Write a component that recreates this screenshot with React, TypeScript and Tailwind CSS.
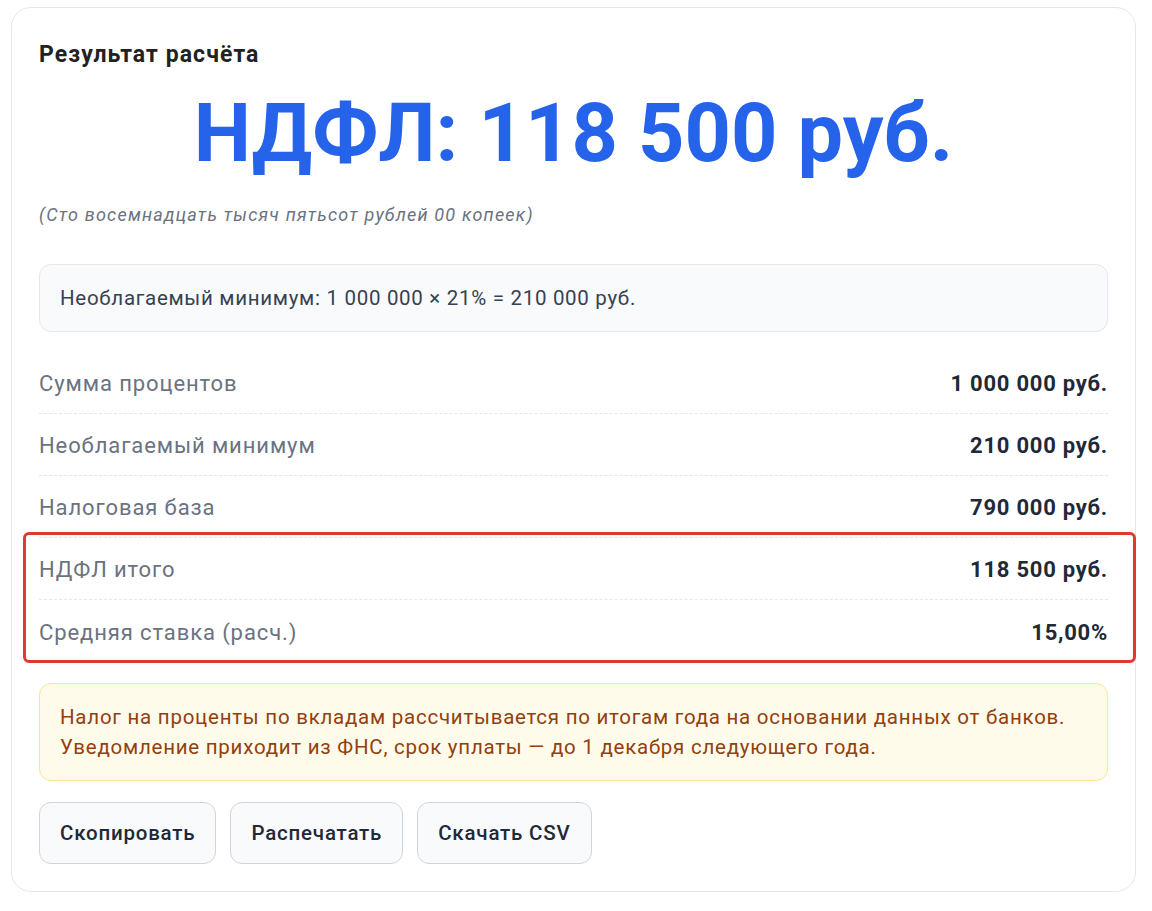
const rows = [
  { label: "Сумма процентов", value: "1 000 000 руб." },
  { label: "Необлагаемый минимум", value: "210 000 руб." },
  { label: "Налоговая база", value: "790 000 руб." },
  { label: "НДФЛ итого", value: "118 500 руб." },
  { label: "Средняя ставка (расч.)", value: "15,00%" },
]

const buttons = ["Скопировать", "Распечатать", "Скачать CSV"]

export default function App() {
  return (
    <div className="min-h-screen bg-white font-['Roboto','Liberation_Sans',sans-serif]">
      <div className="ml-[11px] mt-[7px] w-[1125px] rounded-[20px] border border-[#e5e7eb] bg-white px-[27px] pt-[33px] pb-[27px]">
        {/* заголовок */}
        <h2 className="text-[23px] leading-[28px] font-bold tracking-[1.1px] text-[#222222]">Результат расчёта</h2>

        {/* итоговая сумма */}
        <div className="mt-[12px] text-center text-[81px] leading-[106px] font-bold text-[#2563eb]">
          НДФЛ: 118 500 руб.
        </div>
        <div className="mt-[16px] text-[18px] leading-[24px] italic tracking-[1.2px] text-[#6b7280]">
          (Сто восемнадцать тысяч пятьсот рублей 00 копеек)
        </div>

        {/* формула */}
        <div className="mt-[37px] rounded-[12px] border border-[#e5e7eb] bg-[#f8fafc] px-[20px] py-[19px] text-[20.5px] leading-[28px] tracking-[0.7px] text-[#374151]">
          Необлагаемый минимум: 1 000 000 × 21% = 210 000 руб.
        </div>

        {/* таблица */}
        <div className="relative mt-[20px]">
          {rows.map((r, i) => (
            <div
              key={r.label}
              className={`flex items-center justify-between h-[62px] pt-[2px] text-[22px] ${i < rows.length - 1 ? "border-b border-dashed border-[#e5e7eb]" : ""}`}
            >
              <span className="tracking-[0.9px] text-[#6b7280]">{r.label}</span>
              <span className="font-bold tracking-[0.75px] text-[#1f2937]">{r.value}</span>
            </div>
          ))}
          {/* выделение */}
          <div className="pointer-events-none absolute left-[-16px] right-[-28px] top-[180px] h-[131px] rounded-[6px] border-[3px] border-[#dc3b34]" />
        </div>

        {/* примечание */}
        <div className="mt-[21px] rounded-[12px] border border-[#fde68a] bg-[#fffbeb] px-[20px] py-[18px] text-[20.5px] leading-[30px] tracking-[0.75px] text-[#92400e]">
          Налог на проценты по вкладам рассчитывается по итогам года на основании данных от банков.
          <br />
          Уведомление приходит из ФНС, срок уплаты — до 1 декабря следующего года.
        </div>

        {/* кнопки */}
        <div className="mt-[21px] flex gap-[14px]">
          {buttons.map(b => (
            <button
              key={b}
              className="rounded-[12px] border border-[#d1d5db] bg-[#f8fafc] px-[20px] py-[16px] text-[20.5px] leading-[28px] font-medium tracking-[0.8px] text-[#1f2937]"
            >
              {b}
            </button>
          ))}
        </div>
      </div>
    </div>
  )
}
